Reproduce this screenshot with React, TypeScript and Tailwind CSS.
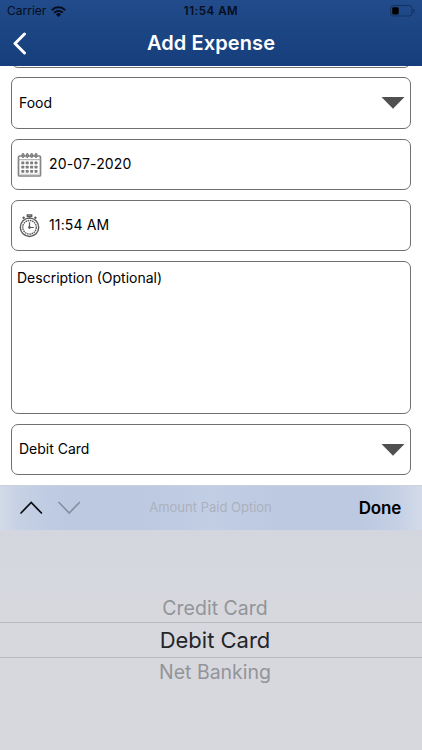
import React from "react";

const OPTIONS = ["Credit Card", "Debit Card", "Net Banking"];

export default function App() {
  return (
    <div className="flex h-[750px] w-[422px] flex-col overflow-hidden bg-white font-[Inter,sans-serif] text-black">
      <Header />
      <ExpenseForm />
      <PickerToolbar title="Amount Paid Option" />
      <Picker options={OPTIONS} selected="Debit Card" />
    </div>
  );
}

function Header() {
  return (
    <header className="h-[66px] shrink-0 bg-linear-to-b from-[#214b8a] to-[#163e7c]">
      <div className="flex h-[22px] items-center px-[7px] text-[#050d1c]">
        <div className="flex flex-1 items-center gap-[5px]">
          <span className="text-[12px]">Carrier</span>
          <WifiIcon />
        </div>
        <span className="pt-px text-[11.5px] font-semibold tracking-[0.55px]">
          11:54 AM
        </span>
        <div className="flex flex-1 justify-end">
          <BatteryIcon />
        </div>
      </div>
      <div className="flex h-[41px] items-center px-[12px] text-white">
        <svg width="16" height="24" viewBox="0 0 16 24" fill="none">
          <path
            d="M12.5 3 3 12.5l9.5 9.5"
            stroke="currentColor"
            strokeWidth="3"
            strokeLinecap="round"
            strokeLinejoin="round"
          />
        </svg>
        <h1 className="flex-1 pr-[16px] text-center text-[20px] font-semibold tracking-[0.1px]">
          Add Expense
        </h1>
      </div>
    </header>
  );
}

function ExpenseForm() {
  return (
    <main className="flex h-[419px] shrink-0 flex-col gap-[10px] px-[11px]">
      {/* end of the field that is scrolled under the header */}
      <div className="-mb-px flex h-[2px] shrink-0 flex-col justify-end overflow-hidden">
        <div className="h-[51px] shrink-0 rounded-[7px] border border-[#707070]" />
      </div>
      <SelectField value="Food" className="h-[52px]" />
      <IconField icon={<CalendarIcon />} value="20-07-2020" />
      <IconField icon={<StopwatchIcon />} value="11:54 AM" />
      <div className="h-[153px] shrink-0 rounded-[7px] border border-[#707070] px-[5px] pt-[6px] text-[14px] leading-5">
        Description (Optional)
      </div>
      <SelectField value="Debit Card" className="h-[51px]" />
    </main>
  );
}

function SelectField({
  value,
  className,
}: {
  value: string;
  className: string;
}) {
  return (
    <div
      className={`${className} flex shrink-0 items-center justify-between rounded-[7px] border border-[#707070] pr-[5px] pl-[7px] text-[14px]`}
    >
      <span className="pb-[2px]">{value}</span>
      <svg width="24" height="12" viewBox="0 0 24 12">
        <path d="M0.5 0h23L12 11.7z" fill="#505050" />
      </svg>
    </div>
  );
}

function IconField({ icon, value }: { icon: React.ReactNode; value: string }) {
  return (
    <div className="flex h-[51px] shrink-0 items-center gap-[7px] rounded-[7px] border border-[#707070] pl-[5px] text-[14px]">
      {icon}
      <span className="pb-[2px] tracking-[0.15px]">{value}</span>
    </div>
  );
}

function PickerToolbar({ title }: { title: string }) {
  return (
    <div className="flex h-[45px] shrink-0 items-center border-t border-[#cbd2dc] bg-[linear-gradient(90deg,#d1dae8_0%,#c5d0e4_5%,#bcc9e1_16%,#bcc9e1_34%,#c2cee4_50%,#bcc9e1_65%,#bcc9e1_86%,#c5d0e5_94%,#d3dbe9_100%)] pr-[21px] pl-[20px]">
      <div className="flex flex-1 gap-[15px]">
        <Chevron d="m1 12 10.2-10.5L21.4 12" stroke="#0a0c10" />
        <Chevron d="m1 1.5 10.2 10.5L21.4 1.5" stroke="#8590a3" />
      </div>
      <span className="text-[13px] text-[#abb1bd]">{title}</span>
      <div className="flex-1 pt-px text-right text-[17px] font-semibold tracking-[-0.2px]">
        Done
      </div>
    </div>
  );
}

function Chevron({ d, stroke }: { d: string; stroke: string }) {
  return (
    <svg width="23" height="14" viewBox="0 0 23 14" fill="none">
      <path d={d} stroke={stroke} strokeWidth="1.7" strokeLinecap="round" />
    </svg>
  );
}

function Picker({
  options,
  selected,
}: {
  options: string[];
  selected: string;
}) {
  return (
    <div className="flex flex-1 flex-col bg-linear-to-b from-[#d4d6df] via-[#d6d8de] via-30% to-[#d7d8dd] pt-[64px] text-center">
      {options.map((option) =>
        option === selected ? (
          <div
            key={option}
            className="h-[36px] border-y border-[#b9babf] pl-[8px] text-[22px] leading-[34px] text-[#242529]"
          >
            {option}
          </div>
        ) : (
          <div
            key={option}
            className="h-[28px] pl-[8px] text-[19.5px] leading-[28px] text-[#939499]"
          >
            {option}
          </div>
        )
      )}
    </div>
  );
}

function WifiIcon() {
  return (
    <svg width="15" height="11" viewBox="0 0 15 11" fill="none">
      <g stroke="currentColor" strokeWidth="2">
        <path d="M0.8 4.1a9.5 9.5 0 0 1 13.4 0" />
        <path d="M3.2 6.7a6.1 6.1 0 0 1 8.6 0" />
      </g>
      <path d="M5 8.4a3.5 3.5 0 0 1 5 0L7.5 11z" fill="currentColor" />
    </svg>
  );
}

function BatteryIcon() {
  return (
    <svg width="25" height="12" viewBox="0 0 25 12" fill="none">
      <rect x="0.5" y="0.5" width="21.5" height="10.5" rx="3" stroke="#14305f" />
      <rect x="2.2" y="2.2" width="6.5" height="7.2" rx="1.3" fill="#000" />
      <path d="M23.3 4v4c.9-.3 1.3-1 1.3-2s-.4-1.7-1.3-2z" fill="#14305f" />
    </svg>
  );
}

function CalendarIcon() {
  return (
    <svg width="25" height="25" viewBox="0 0 25 25" fill="none">
      <rect x="1.5" y="4" width="22" height="20" rx="1" stroke="#858585" strokeWidth="1.7" />
      <path d="M1.5 7.7h22" stroke="#a5a5a5" />
      {[6, 10.3, 14.7, 19].map((x) => (
        <rect key={x} x={x - 1} y="1.5" width="2" height="4" rx="1" stroke="#707070" fill="#999" />
      ))}
      {[10.7, 14.9, 19.1].map((y) =>
        [5.8, 10.2, 14.6, 19].map((x) => (
          <rect key={`${x}-${y}`} x={x - 1.5} y={y - 1.2} width="3" height="2.8" rx="0.6" fill="#7c7c7c" />
        ))
      )}
      <path d="M3 22.3h19" stroke="#bbb" strokeWidth="0.8" />
    </svg>
  );
}

function StopwatchIcon() {
  return (
    <svg width="25" height="25" viewBox="0 0 25 25" fill="none" stroke="#5c5c5c">
      <circle cx="12.5" cy="14.3" r="9.2" strokeWidth="1.4" />
      <circle cx="12.5" cy="14.3" r="6.8" strokeWidth="1.4" strokeDasharray="1.6 0.7" />
      <path d="M10.3 2h4.4v1.6h-4.4zM12.5 3.6v2" strokeWidth="1.4" />
      <path d="m5.8 5.5 1.7-1.6M19.2 5.5l-1.7-1.6" strokeWidth="2.1" />
      <path d="M12.5 9.3v5.2h4.3" strokeWidth="1.2" />
      <circle cx="12.5" cy="14.4" r="1" fill="#5c5c5c" />
    </svg>
  );
}
